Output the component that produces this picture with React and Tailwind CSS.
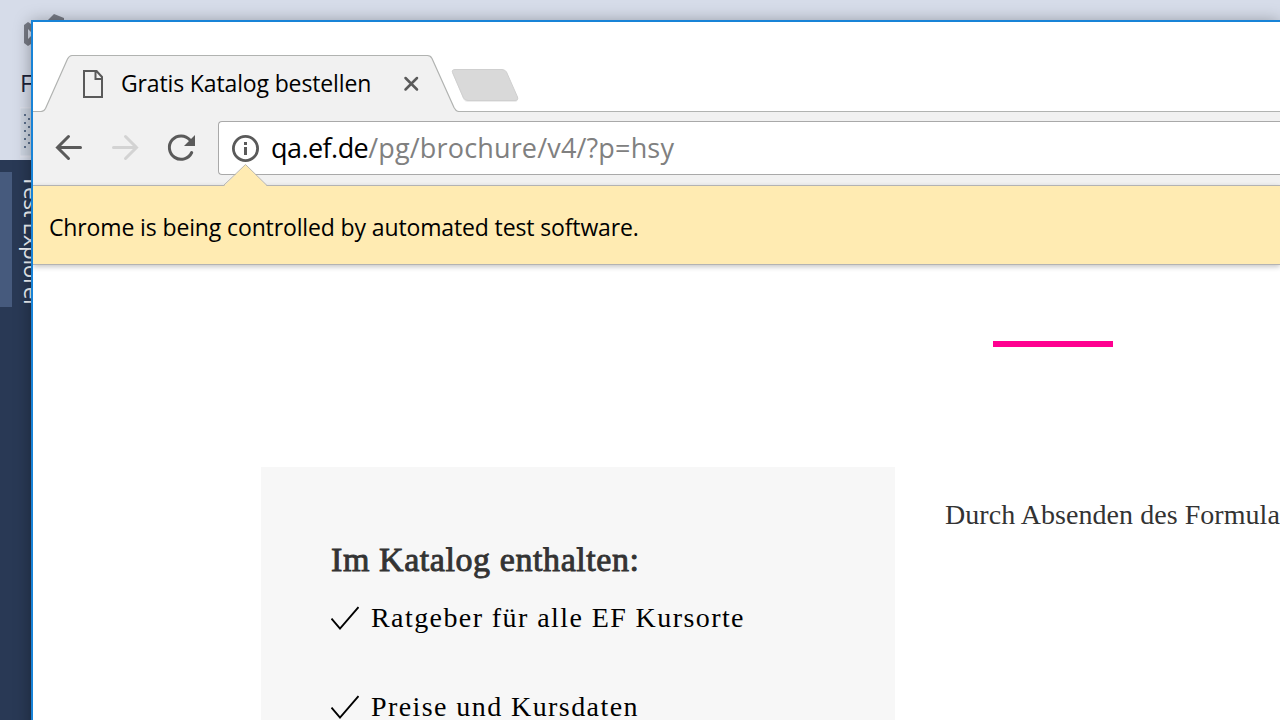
const UI_FONT = "font-['Open_Sans','Noto_Sans',sans-serif]";
const SERIF_FONT = "font-['Liberation_Serif',serif]";

function EditorBackdrop() {
  return (
    <div className="flex h-[720px] w-[1280px] flex-col bg-[#293955]">
      <div className="flex h-[160px] flex-col bg-[#d6dce9] pl-5">
        <svg className="mt-3 h-[40px] w-[60px]" viewBox="20 12 60 40">
          <path d="M24 25 L28 22 L34 26 V42 L28 46 L24 43 Z M28 29 V39 L33 34 Z" fill="#777b85" fillRule="evenodd" />
          <path d="M48 20 L54 14 L64 18 V24 H48 Z" fill="#777b85" />
        </svg>
        <div className={`mt-[15px] h-8 text-[24px] leading-8 text-[#1b2238] ${UI_FONT}`}>F</div>
        <svg className="mt-2 h-[51px] w-[60px]" viewBox="20 107 60 51">
          <rect x="19.5" y="107.5" width="70" height="49" fill="#cdd5e1" stroke="#dcdfea" strokeWidth="2" />
          {[114, 122, 130, 138, 146].map((y) => (
            <g key={y} fill="#5c708c">
              <rect x="24" y={y} width="2" height="2" />
              <rect x="28" y={y + 4} width="2" height="2" opacity={y > 142 ? 0 : 1} />
            </g>
          ))}
        </svg>
      </div>
      <div className="flex flex-1 pt-3">
        <div className="h-[135px] w-3 bg-[#465a7d]" />
        <div className={`ml-[6px] h-[160px] pt-[3px] text-[22.5px] leading-7 tracking-[-0.4px] whitespace-nowrap text-[#f4f6fa] [writing-mode:vertical-rl] ${UI_FONT}`}>
          Test Explorer
        </div>
      </div>
    </div>
  );
}

function TabStrip() {
  return (
    <div className="relative h-[90px] shrink-0 bg-white">
      <svg className="absolute inset-0 h-[90px] w-[1247px]" viewBox="33 22 1247 90">
        <path
          d="M32 111.5 H41 Q44 111.5 45.5 108.500 L67.500 59 Q69.300 55.500 72 55.500 H427.500 Q430.500 55.500 432 58.500 L454 107.500 Q456 111.500 459 111.500 H1281 V113 H32 Z"
          fill="#f1f1f1"
          stroke="#b1b3b1"
          strokeWidth="1.2"
        />
        <path
          d="M455 70.500 H502 Q505 70.500 506.500 73 L517.500 98 Q518.500 102 515 102 H468 Q465 102 463.500 99.500 L452.500 73.500 Q451.500 70.500 455 70.500 Z"
          fill="#ececec"
        />
        <path
          d="M455 69.500 H502 Q505 69.500 506.500 72 L517.500 97 Q518.500 100.500 515 100.500 H468 Q465 100.500 463.500 98 L452.500 72.500 Q451.500 69.500 455 69.500 Z"
          fill="#d9d9d9"
          stroke="#cfcfcf"
          strokeWidth="1"
        />
      </svg>
      <div className="relative flex h-full items-center pt-[33px] pl-[49px]">
        <svg className="h-7 w-[22px] shrink-0" viewBox="82 70 22 28">
          <path d="M84 71 H96.500 L102 77 V97 H84 Z M95.500 71 V79 H102 M96.500 71 L102 77" fill="none" stroke="#5a5a5a" strokeWidth="2" />
        </svg>
        <div className={`ml-[17px] w-[281px] -translate-y-px text-[23px] leading-8 tracking-[-0.14px] whitespace-nowrap text-black ${UI_FONT}`}>
          Gratis Katalog bestellen
        </div>
        <svg className="ml-px h-4 w-4 shrink-0" viewBox="0 0 16 16">
          <path d="M2.500 2 L14 13.500 M14 2 L2.500 13.500" stroke="#5a5a5a" strokeWidth="2.500" strokeLinecap="round" />
        </svg>
      </div>
    </div>
  );
}

function Toolbar() {
  return (
    <div className="flex h-[73px] shrink-0 items-start bg-[#f1f1f1] pt-[9px]">
      <svg className="h-[54px] w-[185px] shrink-0" viewBox="33 121 185 54" fill="none">
        <path d="M80.500 147.500 H57.500 M68.500 136.500 L57.500 147.500 L68.500 158.500" stroke="#5a5a5a" strokeWidth="3" strokeLinecap="round" />
        <path d="M113.500 147.500 H136.500 M125.500 136.500 L136.500 147.500 L125.500 158.500" stroke="#d3d3d3" strokeWidth="3" strokeLinecap="round" />
        <path d="M190 140 A11.700 11.700 0 1 0 191.700 152.500" stroke="#5a5a5a" strokeWidth="3" strokeLinecap="round" />
        <path d="M195 135 V146 H184 Z" fill="#5a5a5a" />
      </svg>
      <div className="flex h-[54px] flex-1 items-center rounded-l border border-r-0 border-[#a9a9a9] bg-white pl-3">
        <svg className="h-7 w-7 shrink-0" viewBox="0 0 28 28">
          <circle cx="14.500" cy="14.500" r="12.100" fill="none" stroke="#5a5a5a" strokeWidth="2.800" />
          <path d="M13 8 H16 V11 H13 Z M13 13 H16 V21 H13 Z" fill="#5a5a5a" />
        </svg>
        <div className={`ml-3 text-[27px] leading-9 tracking-[0.16px] whitespace-nowrap text-[#808080] ${UI_FONT}`}>
          <span className="tracking-[-0.55px] text-black">qa.ef.de</span>/pg/brochure/v4/?p=hsy
        </div>
      </div>
    </div>
  );
}

function InfoBar() {
  return (
    <div className="relative z-10 h-20 shrink-0 border-y border-[#b3b3b3] bg-[#ffebb2] pt-[25px] pl-4 shadow-[0_2px_5px_rgba(0,0,0,0.22)]">
      <svg className="absolute -top-[22px] left-[189px] h-6 w-[46px]" viewBox="222 164 46 24">
        <path d="M224 186 L245.500 164.500 L267 186 V188 H224 Z" fill="#ffebb2" />
        <path d="M223.500 185.500 L245.500 164.500 L267 185.500" fill="none" stroke="#b9b6ae" strokeWidth="1" />
      </svg>
      <div className={`text-[23px] leading-8 tracking-[-0.13px] whitespace-nowrap text-black ${UI_FONT}`}>
        Chrome is being controlled by automated test software.
      </div>
    </div>
  );
}

function CheckItem({ children }) {
  return (
    <li className="flex h-[89px] items-start">
      <svg className="mt-[3px] h-7 w-7 shrink-0" viewBox="0 0 28 28" fill="none">
        <path d="M0.500 13.500 L9 23.500 L27.500 2" stroke="#000" strokeWidth="1.900" />
      </svg>
      <span className={`ml-3 text-[28px] leading-8 tracking-[1.42px] whitespace-nowrap text-black ${SERIF_FONT}`}>{children}</span>
    </li>
  );
}

function Page() {
  return (
    <main className="flex-1 bg-white">
      <div className="mt-[76px] ml-[960px] h-[6px] w-[120px] bg-[#ff0090]" />
      <div className="mt-[120px] flex pl-[228px]">
        <section className="h-[400px] w-[634px] shrink-0 bg-[#f7f7f7] pt-[73px] pl-[70px]">
          <h2 className={`text-[34px] leading-10 tracking-[0.58px] whitespace-nowrap text-[#333] [-webkit-text-stroke:0.9px_#333] ${SERIF_FONT}`}>
            Im Katalog enthalten:
          </h2>
          <ul className="mt-[22px]">
            <CheckItem>Ratgeber für alle EF Kursorte</CheckItem>
            <CheckItem>Preise und Kursdaten</CheckItem>
          </ul>
        </section>
        <p className={`mt-8 ml-[50px] text-[28px] leading-8 tracking-[0.05px] whitespace-nowrap text-[#333] ${SERIF_FONT}`}>
          Durch Absenden des Formula
        </p>
      </div>
    </main>
  );
}

export default function App() {
  return (
    <div className="relative h-[720px] w-[1280px] overflow-hidden">
      <EditorBackdrop />
      <div className="absolute top-5 left-[31px] flex h-[760px] w-[1249px] flex-col overflow-hidden border-t-2 border-l-2 border-[#1883d7] bg-white shadow-[0_2px_16px_rgba(0,0,0,0.35)]">
        <TabStrip />
        <Toolbar />
        <InfoBar />
        <Page />
      </div>
    </div>
  );
}
